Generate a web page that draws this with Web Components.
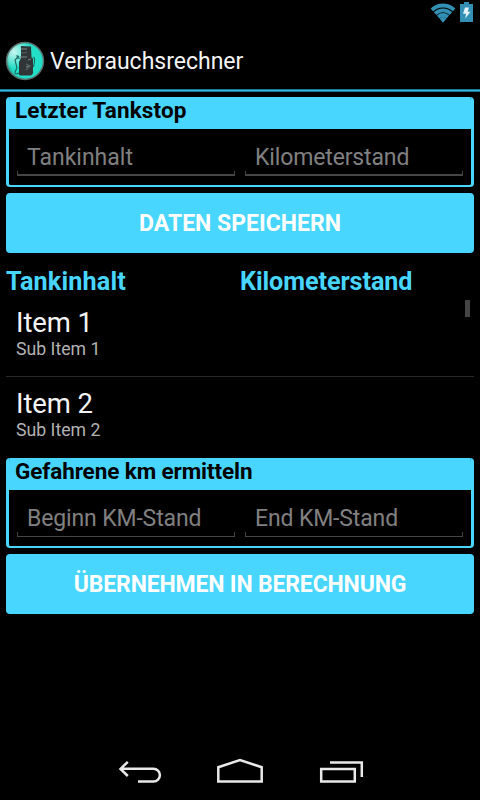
<!DOCTYPE html>
<html lang="de"><head><meta charset="utf-8"><title>Verbrauchsrechner</title>
<style>
html,body{margin:0;background:#000;height:100%;overflow:hidden}
body{font-family:Roboto,"Noto Sans",sans-serif;color:#f3f3f3}
</style></head><body>
<fuel-app></fuel-app>
<script>
const define=(name,html)=>customElements.define(name,class extends HTMLElement{
  constructor(){super();this.attachShadow({mode:'open'}).innerHTML=html;}
});
define('status-bar',`<style>:host{display:flex;justify-content:flex-end;height:32px;padding-right:7px;box-sizing:border-box}svg{display:block}</style>
<svg width="43" height="26" viewBox="430 0 43 26"><defs><clipPath id="w"><path d="M443 22.5L429.8 7.5Q443 -1.5 456.2 7.5Z"/></clipPath></defs>
<g clip-path="url(#w)" fill="none" stroke="#3290b5" stroke-width="3.8"><circle cx="443" cy="21.5" r="16"/><circle cx="443" cy="21.5" r="11.2"/><circle cx="443" cy="21.5" r="6.5"/><circle cx="443" cy="21" r="2" fill="#3290b5"/></g>
<path fill="#3290b5" d="M460 4h4V2h5v2h4v18h-13z"/><path fill="#e4f2f7" d="M465 7.5h4l-1.300 4.300h2.800l-5.300 6.700.900-4.800H463z"/></svg>`);
define('app-bar',`<style>:host{display:flex;align-items:center;height:60px;box-sizing:border-box;padding:3px 0 6px 5px;background:linear-gradient(#1f7899 0 1px,#33b5e5 1px 2px,#1f7899 2px) bottom/100% 3px no-repeat;gap:5px}svg{flex:none}span{font-size:23px;line-height:28px;white-space:nowrap;padding-top:2px}</style>
<svg width="40" height="42" viewBox="5 40 40 42"><defs><radialGradient id="g" cx=".55" cy=".5" r=".6"><stop offset="0" stop-color="#25e6cf"/><stop offset=".75" stop-color="#22dcc5"/><stop offset="1" stop-color="#15947f"/></radialGradient><radialGradient id="h" cx=".2" cy=".25" r=".45"><stop stop-color="#fff" stop-opacity=".75"/><stop offset="1" stop-color="#fff" stop-opacity="0"/></radialGradient></defs>
<circle cx="25" cy="61" r="18.500" fill="url(#g)"/><circle cx="25" cy="61" r="18.500" fill="url(#h)" stroke="#5a6e6c" stroke-width="1.500"/>
<path d="M21 46l10 .5 .5 11 1.500 1v15l-2 2H20l-1-1V62l2-4z" fill="#303638"/>
<path d="M19 56l-4 4 2 8-2 4q0 3 4 1M33 57q2 0 1.500 5l-1 5M17 55q0 4 3 3" fill="none" stroke="#1f6760" stroke-width="1.100"/>
<path d="M21 49h6M20 57h7M28 60l3-1M26 67l4-1" fill="none" stroke="#788686" stroke-width="1"/><path d="M21 53l6-.5M26 64l4 2-4 4" fill="none" stroke="#566263" stroke-width="1.200"/></svg><span><slot></slot></span>`);
define('group-panel',`<style>:host{display:block;height:90px;box-sizing:border-box;border:3px solid #48d6ff;border-top:0;border-bottom-width:2px;border-radius:4px;background:#000;overflow:hidden}
.head{height:31.500px;margin:0 -3px;padding-left:9px;background:#48d6ff;color:#000;font-weight:700;font-size:22.5px;line-height:27px;white-space:nowrap;box-sizing:border-box}
.fields{display:grid;grid-template-columns:220px 220px;column-gap:8px;padding:12.500px 0 0 7px}</style>
<div class="head"><slot name="title"></slot></div><div class="fields"><slot></slot></div>`);
define('hint-field',`<style>:host{display:block;height:35px;position:relative;color:#808080;font-size:23px;line-height:34px;white-space:nowrap;padding-left:11px;box-sizing:border-box;letter-spacing:-.14px}
i{position:absolute;left:1px;right:1px;bottom:0;height:5px;border:var(--line,2px) solid #464646;border-top:0;box-sizing:border-box;border-left-width:1.500px;border-right-width:1.500px}</style><slot></slot><i></i>`);
define('action-button',`<style>:host{display:flex;height:60px;align-items:center;justify-content:center;background:#48d6ff;border-radius:4px;color:#fff;font-weight:700;font-size:23px;white-space:nowrap}</style><span><slot></slot></span>`);
define('column-heads',`<style>:host{display:grid;grid-template-columns:1fr 1fr;height:41px;margin-top:6px;color:#48d6ff;font-weight:700;font-size:25.2px;line-height:46px;white-space:nowrap}</style><slot></slot>`);
define('list-row',`<style>:host{display:block;height:81px;padding:6px 0 0 10px;box-sizing:border-box}
.t{font-size:27.5px;line-height:33px;letter-spacing:-.1px}.s{font-size:17.7px;line-height:20px;color:#b2b2b2}</style><div class="t"><slot></slot></div><div class="s"><slot name="sub"></slot></div>`);
define('list-view',`<style>:host{display:block;position:relative;height:158px;overflow:hidden}::slotted(list-row:first-of-type){border-bottom:1px solid #282828;height:77px}::slotted(list-row:last-of-type){padding-top:10px}i{position:absolute;right:4px;top:0;width:5px;height:17px;background:#444}</style><slot></slot><i></i>`);
define('nav-bar',`<style>:host{display:block;height:72px}svg{display:block}</style><svg width="480" height="72" viewBox="0 728 480 72" fill="none" stroke="#e9e9e9" stroke-width="2.500">
<path d="M138 781.500h15.500a6.400 6.400 0 0 0 0-12.800H121M127.800 761.800L120.500 768.900l7.300 7.100"/><path d="M218.300 781.500v-14.300l21.700-7.200 21.700 7.200v14.300z"/><path d="M321.200 768.900h33.600v12.600h-33.600zM330 762.500h31.800V777"/></svg>`);
define('fuel-app',`<style>:host{display:flex;flex-direction:column;width:480px;height:800px;background:#000}main{padding:5px 6px 0;display:flex;flex-direction:column;flex:1}action-button{margin-top:6px}</style>
<status-bar></status-bar><app-bar>Verbrauchsrechner</app-bar>
<main><group-panel><span slot="title" style="letter-spacing:.12px">Letzter Tankstop</span><hint-field style="letter-spacing:0">Tankinhalt</hint-field><hint-field>Kilometerstand</hint-field></group-panel>
<action-button>DATEN SPEICHERN</action-button>
<column-heads><span style="letter-spacing:.15px">Tankinhalt</span><span style="letter-spacing:-.08px">Kilometerstand</span></column-heads>
<list-view><list-row>Item 1<span slot="sub">Sub Item 1</span></list-row><list-row>Item 2<span slot="sub">Sub Item 2</span></list-row></list-view>
<group-panel style="--line:1.500px"><span slot="title" style="letter-spacing:-.1px">Gefahrene km ermitteln</span><hint-field>Beginn KM-Stand</hint-field><hint-field>End KM-Stand</hint-field></group-panel>
<action-button style="letter-spacing:-.17px">ÜBERNEHMEN IN BERECHNUNG</action-button></main><nav-bar></nav-bar>`);
</script></body></html>
